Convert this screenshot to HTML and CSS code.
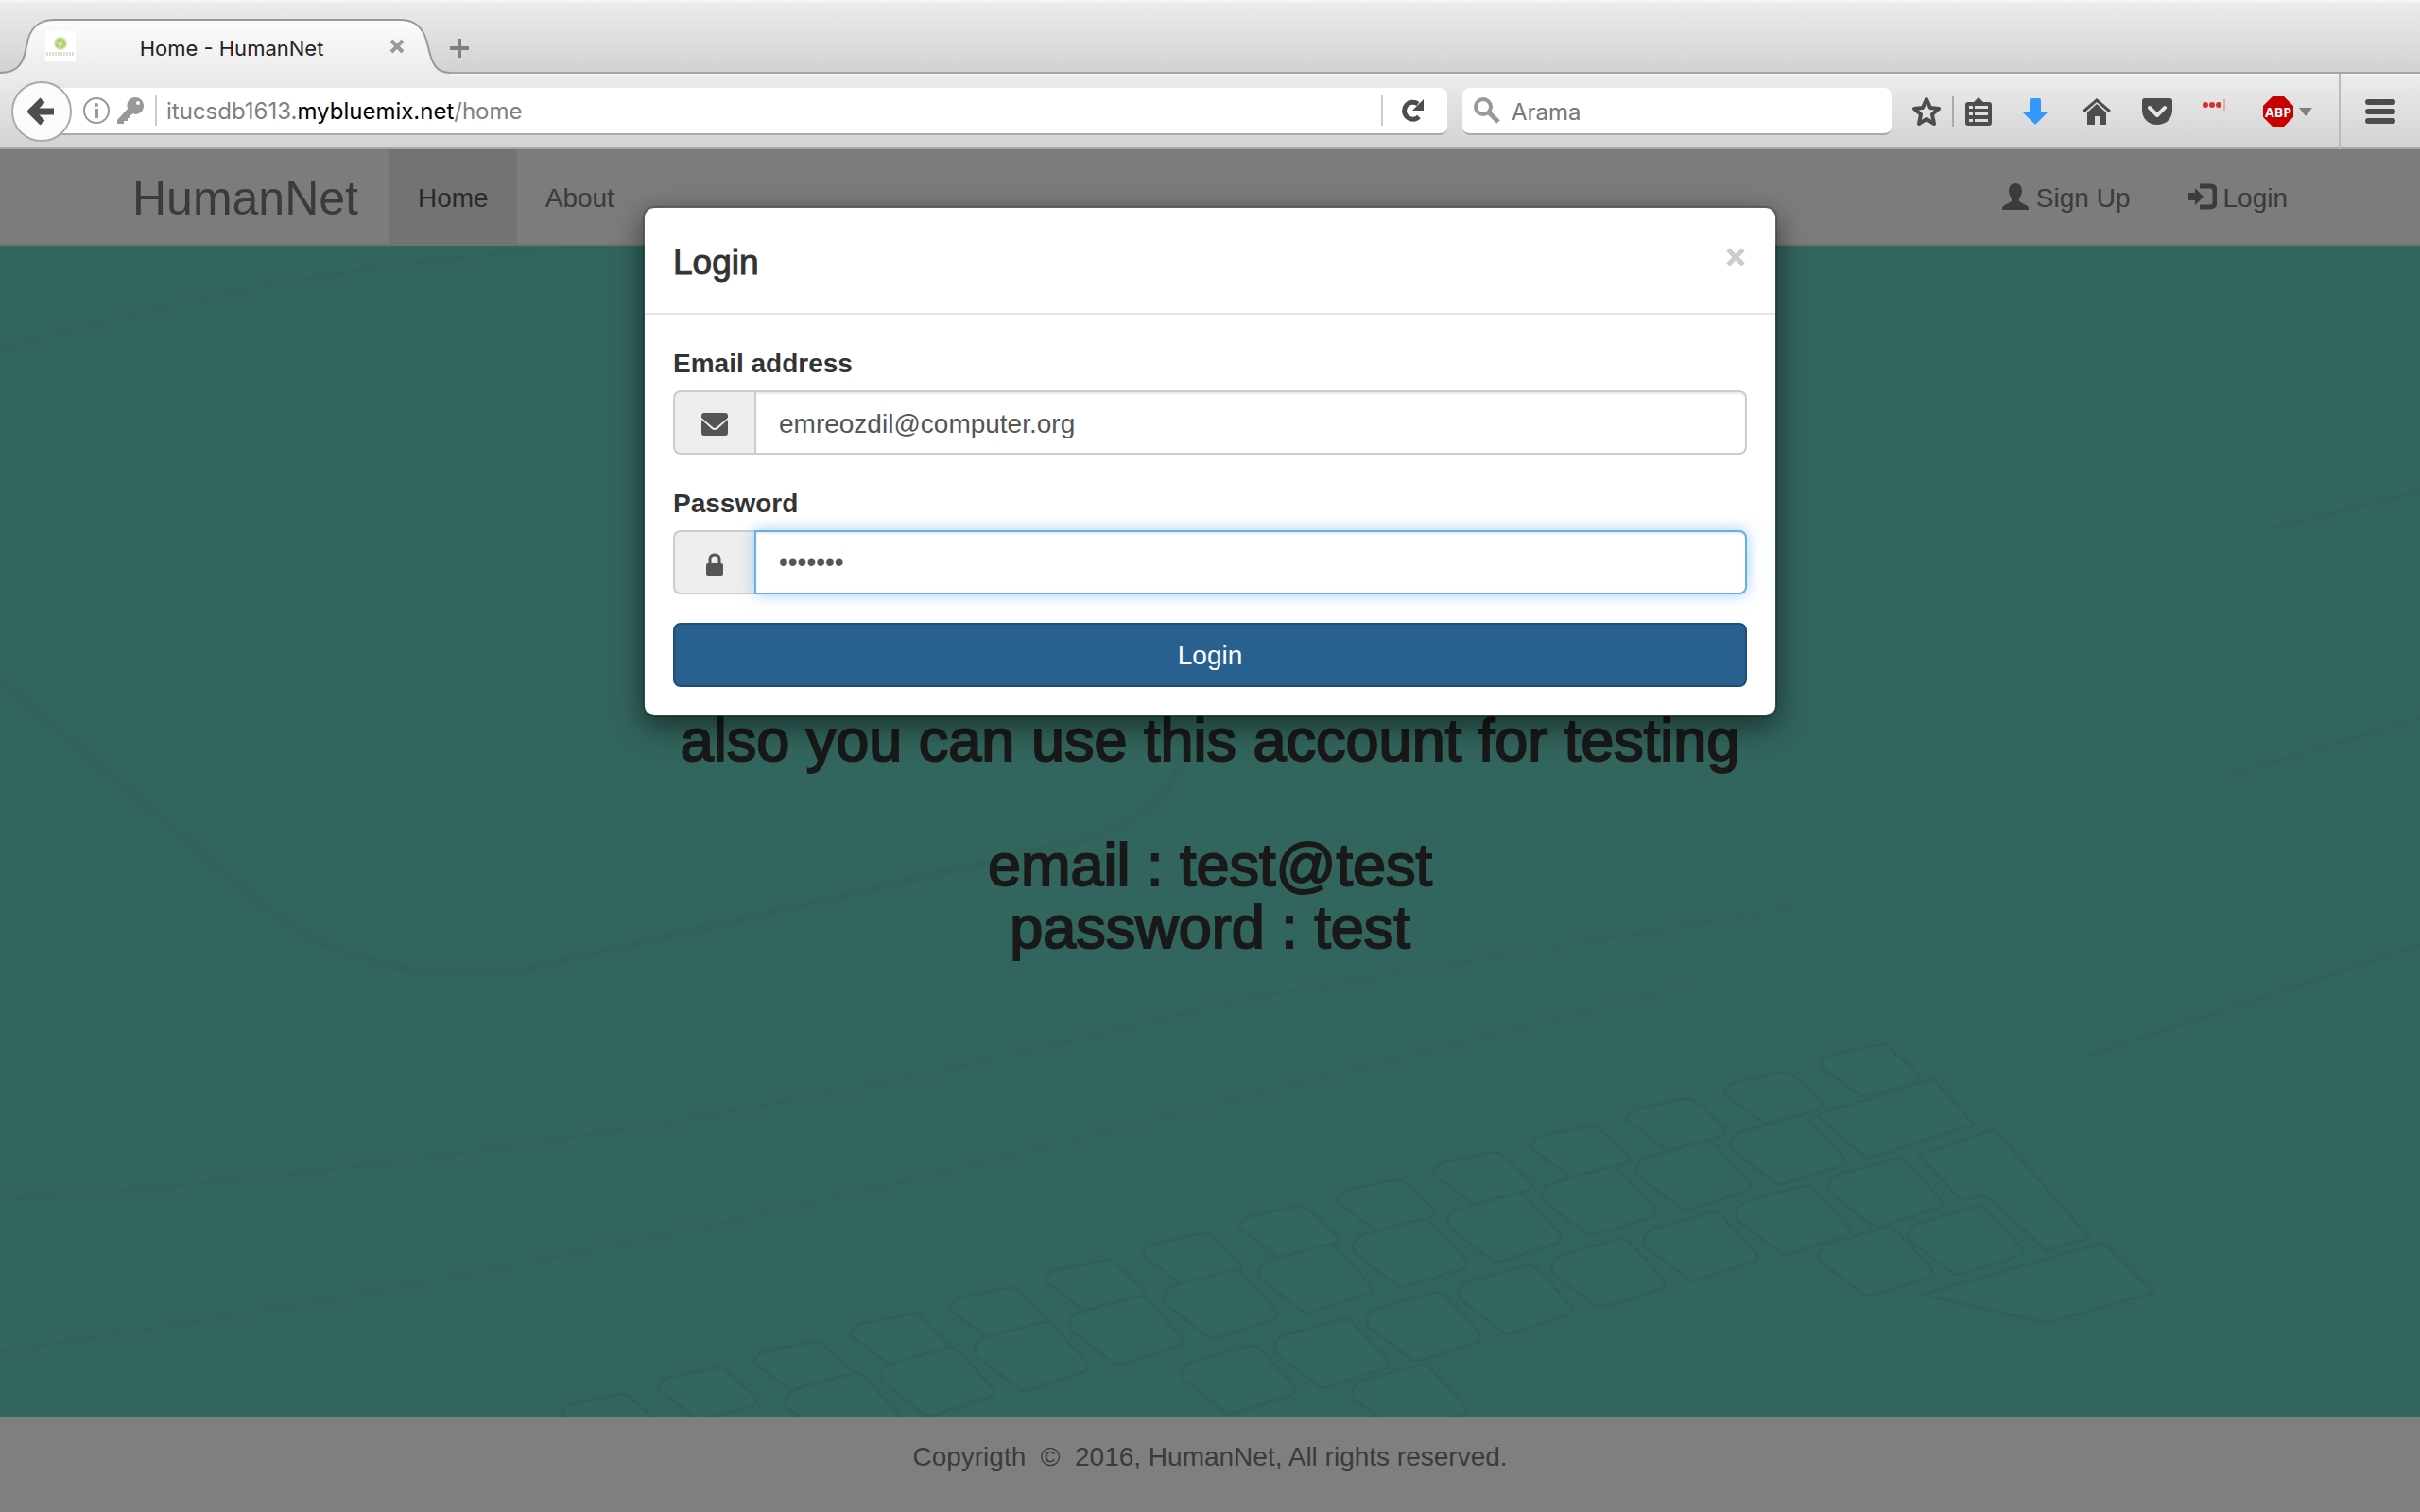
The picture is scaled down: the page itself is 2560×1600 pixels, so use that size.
FILE: index.html
```html
<!DOCTYPE html>
<html lang="en">
<head>
<meta charset="utf-8">
<title>Home - HumanNet</title>
<link rel="stylesheet" href="styles.css">
</head>
<body>
<header class="chrome">
  <div class="tabstrip">
    <div class="tab">
      <svg class="tab-shape" viewBox="0 0 476 60" aria-hidden="true">
        <defs><linearGradient id="tabfill" x1="0" y1="0" x2="0" y2="1"><stop offset="0" stop-color="#fcfcfc"/><stop offset="1" stop-color="#ebebeb"/></linearGradient></defs>
        <path d="M0 60V57C20 57 25 46 28 29C31 10 40 1 57 1H424C440 1 449 10 453 30C457 47 461 57 476 57V60Z" fill="url(#tabfill)"/>
        <path d="M0 57C20 57 25 46 28 29C31 10 40 1 57 1H424C440 1 449 10 453 30C457 47 461 57 476 57" fill="none" stroke="#999" stroke-width="2"/>
      </svg>
      <svg class="favicon" viewBox="0 0 32 32" aria-hidden="true">
        <rect width="32" height="32" fill="#fff"/><circle cx="16" cy="13" r="7" fill="#d5e6ab"/><circle cx="16" cy="13" r="4" fill="none" stroke="#a9ca58" stroke-width="3" stroke-dasharray="2 1"/>
        <path d="M1 24H31" stroke="#ddd" stroke-width="4" stroke-dasharray="2 1"/>
      </svg>
      <span class="tab-title">Home - HumanNet</span>
      <button class="icon-btn tab-close" aria-label="Close tab"><svg width="16" height="16" viewBox="0 0 16 16"><path d="M2 2L14 14M14 2L2 14" stroke="#999" stroke-width="4"/></svg></button>
    </div>
    <button class="icon-btn tab-new" aria-label="New tab"><svg width="20" height="20" viewBox="0 0 20 20"><path d="M10 0V20M0 10H20" stroke="#808080" stroke-width="4"/></svg></button>
  </div>
  <div class="toolbar">
    <button class="back" aria-label="Back"><svg width="30" height="32" viewBox="0 0 30 32"><path d="M16 4L4 16L16 28M5 16H28" fill="none" stroke="#4d4d4d" stroke-width="7"/></svg></button>
    <div class="urlbar">
      <svg width="28" height="28" viewBox="0 0 28 28"><circle cx="14" cy="14" r="13" fill="none" stroke="#999" stroke-width="2"/><circle cx="14" cy="8" r="2" fill="#999"/><path d="M14 12V22" stroke="#999" stroke-width="4"/></svg>
      <svg width="28" height="28" viewBox="0 0 28 28"><path fill="#999" fill-rule="evenodd" d="M19 0C24 0 28 4 28 9C28 14 24 18 19 18L17 17L14 19V22H11V25H7V28H0V24L11 12C9 5 13 0 19 0ZM22 4A2 2 0 1 0 22 8A2 2 0 1 0 22 4Z"/></svg>
      <div class="url" role="textbox" aria-label="Address">itucsdb1613.<b>mybluemix.net</b>/home</div>
      <button class="icon-btn reload" aria-label="Reload"><svg width="24" height="24" viewBox="0 0 24 24"><path d="M18 18.500A9 9 0 1 1 17 5" fill="none" stroke="#4d4d4d" stroke-width="5"/><path d="M23 0V12H11Z" fill="#4d4d4d"/></svg></button>
    </div>
    <label class="search">
      <svg width="28" height="28" viewBox="0 0 28 28"><circle cx="10" cy="10" r="8" fill="none" stroke="#999" stroke-width="4"/><path d="M16 16L26 26" stroke="#999" stroke-width="5"/></svg>
      <input type="search" placeholder="Arama" aria-label="Arama">
    </label>
    <div class="tools">
      <button class="icon-btn tool-star" aria-label="Bookmark"><svg width="32" height="32" viewBox="0 0 32 32"><path d="M16 3L20 12L29 13L22 19L24 29L16 24L8 29L10 19L3 13L12 12Z" fill="none" stroke="#4d4d4d" stroke-width="4" stroke-linejoin="round"/></svg></button>
      <button class="icon-btn tool-list" aria-label="Bookmarks list"><svg width="28" height="30" viewBox="0 0 28 30"><path fill="#4d4d4d" fill-rule="evenodd" d="M9 5L14 0L19 5H25Q28 5 28 8V27Q28 30 25 30H3Q0 30 0 27V8Q0 5 3 5ZM4 9V12H8V9ZM10 9V12H24V9ZM4 16V19H8V16ZM10 16V19H24V16ZM4 23V26H8V23ZM10 23V26H24V23Z"/></svg></button>
      <button class="icon-btn tool-download" aria-label="Downloads"><svg width="28" height="28" viewBox="0 0 28 28"><path fill="#3298fd" d="M10 0H18Q20 0 20 2V14H28L15 27Q14 28 13 27L0 14H8V2Q8 0 10 0Z"/></svg></button>
      <button class="icon-btn" aria-label="Home"><svg width="32" height="28" viewBox="0 0 32 28"><path d="M2 14L16 2L30 14" fill="none" stroke="#4d4d4d" stroke-width="3"/><path fill="#4d4d4d" d="M16 6L26 15V28H19V19H14V28H6V15Z"/></svg></button>
      <button class="icon-btn" aria-label="Pocket"><svg width="32" height="28" viewBox="0 0 32 28"><path fill="#4d4d4d" d="M3 0H29Q32 0 32 3V12C32 22 25 28 16 28S0 22 0 12V3Q0 0 3 0Z"/><path d="M8 10L16 18L24 10" fill="none" stroke="#e6e6e6" stroke-width="4" stroke-linecap="round" stroke-linejoin="round"/></svg></button>
      <button class="icon-btn" aria-label="Passwords"><svg width="32" height="28" viewBox="0 0 32 28"><g fill="#d9302e"><circle cx="3" cy="7" r="3"/><circle cx="10" cy="7" r="3"/><circle cx="17" cy="7" r="3"/></g><path d="M23 1V13" stroke="#e57373"/></svg></button>
      <button class="icon-btn tool-abp" aria-label="Adblock Plus"><svg width="32" height="32" viewBox="0 0 32 32"><path fill="#c80000" d="M10 0H22L32 10V22L22 32H10L0 22V10Z"/><text x="16" y="22" text-anchor="middle" class="abp-text">ABP</text></svg><svg width="14" height="9" viewBox="0 0 14 9"><path d="M0 0H14L7 9Z" fill="#808080"/></svg></button>
    </div>
    <button class="menu" aria-label="Menu"><svg width="32" height="26" viewBox="0 0 32 26"><path d="M3 3H29M3 13H29M3 23H29" stroke="#4d4d4d" stroke-width="6" stroke-linecap="round"/></svg></button>
  </div>
</header>

<div class="page">
  <nav class="navbar">
    <div class="container">
      <a class="brand" href="#">HumanNet</a>
      <a class="nav-link active" href="#">Home</a>
      <a class="nav-link" href="#">About</a>
      <span class="spacer"></span>
      <a class="nav-link" href="#"><svg width="28" height="28" viewBox="0 0 28 28"><path fill="currentColor" d="M14 0C19 0 21 4 21 8C21 12 19 14 18 16V19L27 24Q28 25 28 28H0Q0 25 1 24L10 19V16C9 14 7 12 7 8C7 4 9 0 14 0Z"/></svg>Sign Up</a>
      <a class="nav-link login-link" href="#"><svg width="30" height="28" viewBox="0 0 30 28"><path fill="currentColor" d="M0 10H7V5L16 14L7 23V18H0Z"/><path d="M12 3H23Q28 3 28 8V20Q28 25 23 25H12" fill="none" stroke="currentColor" stroke-width="5"/></svg>Login</a>
    </div>
  </nav>
  <main class="hero">
    <svg class="scene" viewBox="0 0 2560 1240" preserveAspectRatio="xMidYMid slice" aria-hidden="true">
      <defs>
        <path id="key" d="M-60 -7Q-58 -17 -46 -20L8 -35Q18 -38 23 -32L58 6Q64 14 54 17L-2 35Q-12 38 -16 32L-58 0Z"/>
        <path id="keytop" d="M-52 -5Q-50 -14 -40 -17L8 -27Q17 -29 21 -24L51 4Q55 10 46 13L-2 26Q-11 28 -15 23Z"/>
      </defs>
      <g fill="none" stroke="#60c4b2" stroke-width="8">
        <path d="M1250 540Q1240 600 1140 630L560 765Q400 790 280 700L0 460"/>
        <path d="M0 110Q300 20 640 0" stroke-width="3"/>
        <path d="M0 1010Q700 960 1300 800L1900 700" stroke-width="3"/>
        <path d="M0 1170Q500 1100 1000 980L1800 780" stroke-width="3"/>
        <path d="M2400 300L2560 260M2360 560L2560 500M2200 860L2560 740" stroke-width="4"/>
      </g>
      <path fill="#6ad2c0" d="M1931 0V230L1955 683L1970 718L2013 760L2134 786L2251 775L2323 718L2382 287L2425 29L2428 0Z"/>
      <path fill="#65cbb9" d="M2173 80L2304 69L2285 275L2265 517L2251 775L2134 786L2154 344Z"/>
      <path fill="#6ad2c0" d="M2166 390Q2190 360 2218 400V490Q2200 570 2166 572Z"/>
      <g fill="#6ad2c0" stroke="#5bbdab" stroke-width="3">
        <use href="#keytop" x="646" y="1243"/><use href="#keytop" x="748" y="1215"/><use href="#keytop" x="850" y="1187"/><use href="#keytop" x="952" y="1158"/><use href="#keytop" x="1056" y="1130"/><use href="#keytop" x="1158" y="1101"/><use href="#keytop" x="1261" y="1073"/><use href="#keytop" x="1363" y="1044"/><use href="#keytop" x="1466" y="1016"/><use href="#keytop" x="1568" y="987"/><use href="#keytop" x="1671" y="959"/><use href="#keytop" x="1773" y="930"/><use href="#keytop" x="1876" y="902"/><use href="#keytop" x="1978" y="873"/>
        <use href="#key" x="891" y="1229"/><use href="#key" x="991" y="1202"/><use href="#key" x="1091" y="1175"/><use href="#key" x="1191" y="1148"/><use href="#key" x="1291" y="1120"/><use href="#key" x="1391" y="1093"/><use href="#key" x="1491" y="1066"/><use href="#key" x="1591" y="1039"/><use href="#key" x="1691" y="1011"/><use href="#key" x="1791" y="984"/><use href="#key" x="1891" y="957"/>
        <use href="#key" x="1310" y="1200"/><use href="#key" x="1408" y="1172"/><use href="#key" x="1506" y="1144"/><use href="#key" x="1603" y="1115"/><use href="#key" x="1701" y="1087"/><use href="#key" x="1799" y="1059"/><use href="#key" x="1896" y="1031"/><use href="#key" x="1994" y="1002"/>
        <use href="#key" x="1984" y="1075"/><use href="#key" x="2079" y="1053"/><use href="#key" x="1490" y="1220"/>
        <path d="M1922 920L2045 882L2088 930L1975 966Z"/>
        <path d="M2030 962L2110 935L2210 1050L2165 1063L2100 1005L2075 1010Z"/>
        <path d="M2035 1110L2225 1055L2278 1108L2165 1140Z"/>
      </g>
    </svg>
    <h2 class="hero-text">also you can use this account for testing<br><br>email : test@test<br>password : test</h2>
  </main>
  <footer class="footer">Copyrigth &nbsp;©&nbsp; 2016, HumanNet, All rights reserved.</footer>

  <div class="backdrop">
    <section class="modal" role="dialog" aria-labelledby="modal-title">
      <div class="modal-header">
        <h4 id="modal-title">Login</h4>
        <button class="icon-btn modal-close" aria-label="Close"><svg width="20" height="20" viewBox="0 0 20 20"><path d="M2 2L18 18M18 2L2 18" stroke="#ccc" stroke-width="5"/></svg></button>
      </div>
      <form class="modal-body">
        <div class="field">
          <label for="email">Email address</label>
          <div class="input-group">
            <span class="addon"><svg width="28" height="24" viewBox="0 0 28 24"><path fill="#555" d="M3 0H25Q28 0 28 3V5L16 15Q14 17 12 15L0 5V3Q0 0 3 0ZM0 7L11 17Q14 19 17 17L28 7V21Q28 24 25 24H3Q0 24 0 21Z"/></svg></span>
            <input id="email" type="email" value="emreozdil@computer.org">
          </div>
        </div>
        <div class="field">
          <label for="password">Password</label>
          <div class="input-group">
            <span class="addon"><svg width="18" height="24" viewBox="0 0 18 24"><path d="M4 12V7Q4 2 9 2T14 7V12" fill="none" stroke="#555" stroke-width="3"/><rect y="11" width="18" height="13" rx="2" fill="#555"/></svg></span>
            <input id="password" class="focused" type="password" value="testing">
          </div>
        </div>
        <button class="submit" type="button">Login</button>
      </form>
    </section>
  </div>
</div>
</body>
</html>
```
FILE: styles.css
```css
* { box-sizing: border-box; }
body {
  margin: 0;
  min-height: 100vh;
  display: flex;
  flex-direction: column;
  font: 28px/40px "Liberation Sans", Arial, sans-serif;
  color: #333;
}
svg { display: block; flex: none; }
a { text-decoration: none; }
button, input { font: inherit; }
.icon-btn { padding: 0; border: 0; background: none; }

/* browser chrome */
.chrome { font: 22px/28px Inter, sans-serif; }
.tabstrip {
  display: flex;
  height: 78px;
  padding-top: 20px;
  background: linear-gradient(#f8f8f8, #ebebeb 4px, #d2d2d2 76px, #a5a5a5 76px);
}
.tab {
  position: relative;
  width: 476px;
  display: flex;
  align-items: center;
  padding: 0 48px;
}
.tab-shape { position: absolute; left: 0; top: 0; width: 476px; height: 60px; }
.favicon, .tab-title, .tab-close { position: relative; }
.favicon { width: 32px; height: 32px; }
.tab-title { flex: 1; padding: 4px 2px 0 0; text-align: center; color: #222; }
.tab-new { align-self: flex-start; margin-top: 21px; }
.toolbar {
  height: 80px;
  display: flex;
  align-items: center;
  padding-left: 12px;
  background: linear-gradient(#f5f5f5, #ebebeb 3px, #d3d3d3 78px, #a8a8a8 78px);
}
.back {
  z-index: 1;
  width: 64px;
  height: 64px;
  padding: 0;
  display: flex;
  align-items: center;
  justify-content: center;
  border: 2px solid #aaa;
  border-radius: 50%;
  background: #fbfbfb;
}
.urlbar, .search {
  height: 50px;
  display: flex;
  align-items: center;
  background: #fff;
  border-bottom: 2px solid #aaa;
}
.urlbar {
  flex: 1;
  gap: 8px;
  margin-left: -12px;
  padding: 0 24px;
  border-radius: 0 8px 8px 0;
}
.url {
  flex: 1;
  height: 32px;
  font-size: 24px;
  line-height: 34px;
  padding-left: 10px;
  margin-left: 4px;
  border-left: 2px solid #ccc;
  color: #808080;
}
.url b { font-weight: 400; color: #000; }
.reload { height: 32px; padding-left: 20px; border-left: 2px solid #ccc; }
.search { width: 454px; margin-left: 16px; padding: 0 12px; gap: 12px; border-radius: 8px; }
.search input { width: 100%; border: 0; padding: 4px 0 0; outline: 0; background: none; font-size: 24px; }
.search input::placeholder { color: #777; opacity: 1; }
.tools { display: flex; align-items: center; gap: 32px; padding-left: 21px; }
.tool-star { padding-right: 11px; border-right: 2px solid #aaa; margin-right: -20px; }
.tool-download { margin-right: 3px; }
.tool-abp { display: flex; align-items: center; gap: 6px; }
.abp-text { font: bold 14px "Open Sans", sans-serif; fill: #fff; }
.menu {
  align-self: stretch;
  margin-left: 28px;
  padding: 0 26px;
  border: 0;
  border-left: 2px solid #bbb;
  background: none;
}

/* web page */
.page { position: relative; flex: 1; display: flex; flex-direction: column; }
.navbar { background: #f8f8f8; border-bottom: 2px solid #e7e7e7; }
.container { max-width: 2340px; height: 100px; margin: 0 auto; display: flex; align-items: stretch; }
.brand { display: flex; align-items: center; padding: 4px 33px 0 30px; font-size: 50px; color: #777; }
.nav-link { display: flex; align-items: center; gap: 8px; padding: 4px 30px 0; color: #777; }
.nav-link svg { margin-bottom: 4px; }
.login-link { gap: 6px; padding-left: 32px; }
.nav-link.active { background: #e7e7e7; color: #555; }
.spacer { flex: 1; }
.hero {
  position: relative;
  flex: 1;
  display: flex;
  align-items: center;
  justify-content: center;
  background: #65cabb;
  overflow: hidden;
}
.scene { position: absolute; inset: 0; width: 100%; height: 100%; opacity: .5; }
.hero-text {
  position: relative;
  margin: 0;
  padding-top: 4px;
  font-size: 63px;
  font-weight: 400;
  line-height: 66px;
  text-align: center;
  -webkit-text-stroke: 2px #333;
}
.footer { padding: 22px 0 38px; text-align: center; color: #777; background: #fff; }

/* login dialog */
.backdrop {
  position: absolute;
  inset: 0;
  display: flex;
  align-items: flex-start;
  justify-content: center;
  padding-top: 60px;
  background: rgba(0, 0, 0, .5);
}
.modal {
  width: 1200px;
  border: 2px solid rgba(0, 0, 0, .2);
  border-radius: 12px;
  background: #fff;
  background-clip: padding-box;
  box-shadow: 0 10px 30px rgba(0, 0, 0, .5);
}
.modal-header {
  display: flex;
  align-items: flex-start;
  justify-content: space-between;
  padding: 30px 32px 30px 30px;
  border-bottom: 2px solid #e5e5e5;
}
.modal-header h4 {
  margin: 0;
  padding: 8px 0 3px;
  font-size: 37px;
  font-weight: 400;
  line-height: 40px;
  -webkit-text-stroke: 1px #333;
}
.modal-close { padding: 12px 0; }
.modal-body { padding: 30px; }
.field { margin-bottom: 30px; }
.field label { display: block; padding-top: 2px; margin-bottom: 8px; font-weight: 700; }
.input-group { display: flex; height: 68px; }
.addon {
  width: 86px;
  display: flex;
  align-items: center;
  justify-content: center;
  padding-top: 4px;
  border: 2px solid #ccc;
  border-right: 0;
  border-radius: 8px 0 0 8px;
  background: #eee;
}
.input-group input {
  flex: 1;
  min-width: 0;
  padding: 4px 24px 0;
  border: 2px solid #ccc;
  border-radius: 0 8px 8px 0;
  outline: 0;
  color: #555;
  background: #fff;
  box-shadow: inset 0 2px 2px rgba(0, 0, 0, .08);
}
.input-group .focused {
  border-color: #66afe9;
  padding-top: 0;
  box-shadow: inset 0 2px 2px rgba(0, 0, 0, .08), 0 0 16px rgba(102, 175, 233, .6);
}
.submit {
  width: 100%;
  height: 68px;
  padding: 2px 0 0;
  border: 2px solid #204d74;
  border-radius: 8px;
  color: #fff;
  background: #286090;
}
```
